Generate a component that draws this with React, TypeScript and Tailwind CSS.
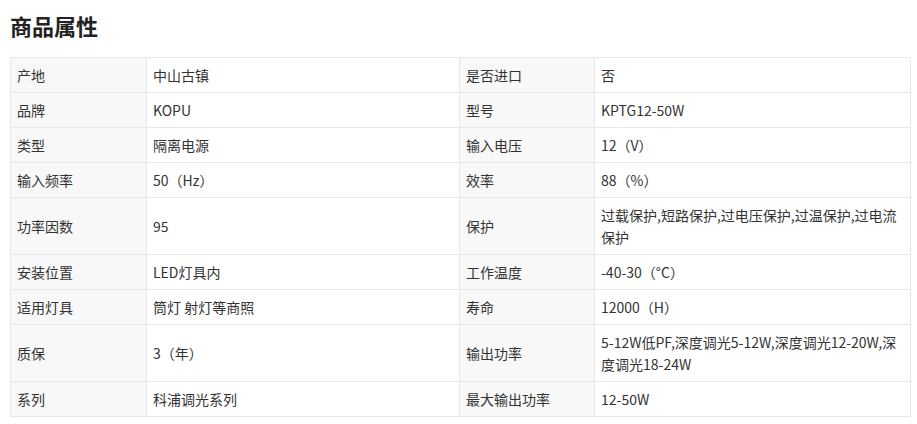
// Product attribute sheet: two label/value pairs per row.

const rows: [string, string, string, string][] = [
  ["产地", "中山古镇", "是否进口", "否"],
  ["品牌", "KOPU", "型号", "KPTG12-50W"],
  ["类型", "隔离电源", "输入电压", "12（V）"],
  ["输入频率", "50（Hz）", "效率", "88（%）"],
  ["功率因数", "95", "保护", "过载保护,短路保护,过电压保护,过温保护,过电流保护"],
  ["安装位置", "LED灯具内", "工作温度", "-40-30（°C）"],
  ["适用灯具", "筒灯 射灯等商照", "寿命", "12000（H）"],
  ["质保", "3（年）", "输出功率", "5-12W低PF,深度调光5-12W,深度调光12-20W,深度调光18-24W"],
  ["系列", "科浦调光系列", "最大输出功率", "12-50W"],
];

const font = { fontFamily: '"Noto Sans CJK SC", "Noto Sans", sans-serif' };

export default function App() {
  return (
    <div className="min-h-[424px] bg-white px-[10px] text-[#333]" style={font}>
      <h2 className="pt-[9px] text-[22px] font-bold leading-[32px] text-[#222]">商品属性</h2>
      <table className="mt-[16px] w-[900px] table-fixed border-collapse text-[14px] leading-[22px]">
        <colgroup>
          <col className="w-[136px]" />
          <col className="w-[313px]" />
          <col className="w-[135px]" />
          <col className="w-[316px]" />
        </colgroup>
        <tbody>
          {rows.map(([k1, v1, k2, v2]) => (
            <tr key={k1}>
              <td className="border border-[#e8e8e8] bg-[#f8f8f8] px-[6px] py-[6px] align-middle">{k1}</td>
              <td className="border border-[#e8e8e8] px-[6px] py-[6px] align-middle">{v1}</td>
              <td className="border border-[#e8e8e8] bg-[#f8f8f8] px-[6px] py-[6px] align-middle">{k2}</td>
              <td className="border border-[#e8e8e8] px-[6px] py-[6px] align-middle">{v2}</td>
            </tr>
          ))}
        </tbody>
      </table>
    </div>
  );
}
